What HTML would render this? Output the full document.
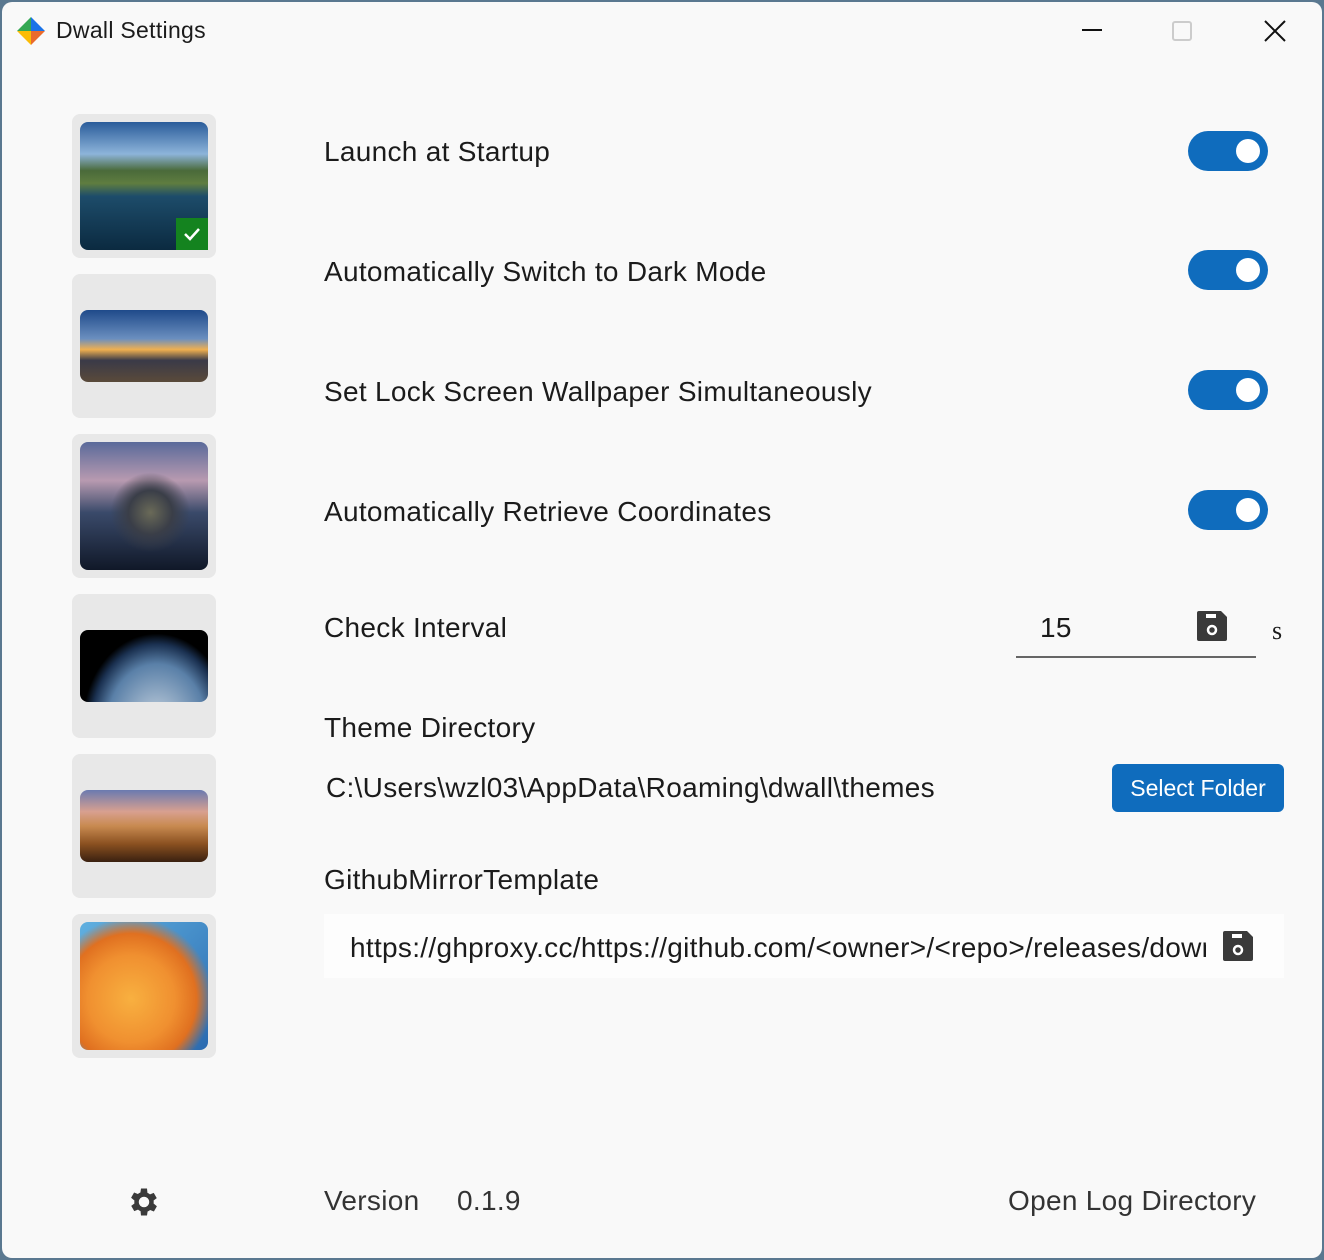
<!DOCTYPE html>
<html><head><meta charset="utf-8"><style>
*{margin:0;padding:0;box-sizing:border-box}
html,body{width:1324px;height:1260px;overflow:hidden;background:#5a7890}
#win{position:absolute;left:2px;top:2px;width:1320px;height:1256px;background:#f9f9f9;border-radius:10px;font-family:"Liberation Sans",sans-serif;color:#1b1b1b}
.a{position:absolute}
.t{font-size:28px;letter-spacing:0.3px;white-space:nowrap}
.card{position:absolute;left:70px;width:144px;height:144px;background:#e8e8e8;border-radius:8px}
.img{position:absolute;left:8px;width:128px;border-radius:8px;overflow:hidden}
.tg{position:absolute;left:1186px;width:80px;height:40px;border-radius:20px;background:#0f6cbd}
.tg::after{content:"";position:absolute;right:8px;top:8px;width:24px;height:24px;border-radius:50%;background:#fff}
</style></head><body><div id="win">
<svg class="a" style="left:14px;top:14px" width="30" height="30" viewBox="0 0 30 30"><polygon points="15,1 15,15 1,15" fill="#34a853"/><polygon points="15,1 29,15 15,15" fill="#1a73e8"/><polygon points="1,15 15,15 15,29" fill="#fbbc05"/><polygon points="15,15 29,15 15,29" fill="#ea6b2d"/></svg>
<div class="a" style="left:54px;top:15px;font-size:23px;letter-spacing:0.3px">Dwall Settings</div>
<div class="a" style="left:1080px;top:27px;width:20px;height:2px;background:#111"></div>
<div class="a" style="left:1170px;top:19px;width:20px;height:20px;border:2px solid #ccc;border-radius:3px"></div>
<svg class="a" style="left:1262px;top:18px" width="22" height="22"><path d="M1 1L21 21M21 1L1 21" stroke="#111" stroke-width="2"/></svg>

<div class="card" style="top:112px"><div class="img" style="top:8px;height:128px;background:linear-gradient(180deg,#2a5c9a 0%,#8db4da 25%,#4a6a3a 38%,#5f7d40 48%,#1d4c6a 58%,#0b2a40 100%)"></div><div class="a" style="left:104px;top:104px;width:32px;height:32px;background:#14831f"><svg width="32" height="32"><path d="M9 16l5 5 9-10" stroke="#fff" stroke-width="2.5" fill="none"/></svg></div></div>
<div class="card" style="top:272px"><div class="img" style="top:36px;height:72px;background:linear-gradient(180deg,#1f4a8a 0%,#6b8fbf 40%,#f0b050 55%,#3a3a48 70%,#5a4a3a 100%)"></div></div>
<div class="card" style="top:432px"><div class="img" style="top:8px;height:128px;background:radial-gradient(ellipse at 55% 55%,#6a6a58 0%,#3a3e48 22%,transparent 40%),linear-gradient(180deg,#5a6a9a 0%,#b89ab0 30%,#3a4a6a 55%,#101828 100%)"></div></div>
<div class="card" style="top:592px"><div class="img" style="top:36px;height:72px;background:radial-gradient(ellipse at 60% 130%,#c8d4e0 0%,#5a80a8 45%,#1a3050 60%,#000 68%)"></div></div>
<div class="card" style="top:752px"><div class="img" style="top:36px;height:72px;background:linear-gradient(180deg,#6a7ab0 0%,#d8a090 30%,#c88a50 50%,#8a5020 75%,#3a2010 100%)"></div></div>
<div class="card" style="top:912px"><div class="img" style="top:8px;height:128px;background:radial-gradient(ellipse at 40% 60%,#f8b040 0%,#f09030 40%,#e07020 60%,transparent 75%),linear-gradient(135deg,#60b0e0,#2a6ab0)"></div></div>

<div class="a t" style="left:322px;top:134px">Launch at Startup</div>
<div class="a t" style="left:322px;top:254px">Automatically Switch to Dark Mode</div>
<div class="a t" style="left:322px;top:374px">Set Lock Screen Wallpaper Simultaneously</div>
<div class="a t" style="left:322px;top:494px">Automatically Retrieve Coordinates</div>
<div class="tg" style="top:129px"></div>
<div class="tg" style="top:248px"></div>
<div class="tg" style="top:368px"></div>
<div class="tg" style="top:488px"></div>

<div class="a t" style="left:322px;top:610px">Check Interval</div>
<div class="a t" style="left:1038px;top:610px">15</div>
<svg class="a" style="left:1194px;top:608px" width="32" height="32" viewBox="0 0 32 32"><path d="M3 1h22l6 6v22a2 2 0 0 1-2 2H3a2 2 0 0 1-2-2V3a2 2 0 0 1 2-2z" fill="#3a3a3a"/><rect x="10" y="4" width="10" height="4" fill="#fff"/><circle cx="16" cy="20" r="4" fill="none" stroke="#fff" stroke-width="2.5"/></svg>
<div class="a" style="left:1014px;top:654px;width:240px;height:2px;background:#666"></div>
<div class="a" style="left:1270px;top:614px;font-family:'Liberation Serif',serif;font-size:26px">s</div>

<div class="a t" style="left:322px;top:710px">Theme Directory</div>
<div class="a t" style="left:324px;top:770px">C:\Users\wzl03\AppData\Roaming\dwall\themes</div>
<div class="a" style="left:1110px;top:762px;width:172px;height:48px;background:#0f6cbd;border-radius:6px;color:#fff;font-size:23px;text-align:center;line-height:48px">Select Folder</div>

<div class="a t" style="left:322px;top:862px">GithubMirrorTemplate</div>
<div class="a" style="left:322px;top:912px;width:960px;height:64px;background:#fdfdfd"></div>
<div class="a t" style="left:348px;top:930px;width:856px;overflow:hidden">https://ghproxy.cc/https://github.com/&lt;owner&gt;/&lt;repo&gt;/releases/download</div>
<svg class="a" style="left:1220px;top:928px" width="32" height="32" viewBox="0 0 32 32"><path d="M3 1h22l6 6v22a2 2 0 0 1-2 2H3a2 2 0 0 1-2-2V3a2 2 0 0 1 2-2z" fill="#3a3a3a"/><rect x="10" y="4" width="10" height="4" fill="#fff"/><circle cx="16" cy="20" r="4" fill="none" stroke="#fff" stroke-width="2.5"/></svg>

<svg class="a" style="left:124px;top:1182px" width="36" height="36" viewBox="0 0 24 24"><path fill="#3a3a3a" d="M19.4 13a7.5 7.5 0 0 0 0-2l2.1-1.6-2-3.5-2.5 1a7 7 0 0 0-1.7-1L15 3h-4l-.4 2.7a7 7 0 0 0-1.7 1l-2.5-1-2 3.5L6.6 11a7.5 7.5 0 0 0 0 2l-2.1 1.6 2 3.5 2.5-1a7 7 0 0 0 1.7 1L11 21h4l.4-2.7a7 7 0 0 0 1.7-1l2.5 1 2-3.5zM13 15.5a3.5 3.5 0 1 1 0-7 3.5 3.5 0 0 1 0 7z" transform="translate(-1 0)"/></svg>
<div class="a t" style="left:322px;top:1183px;color:#333">Version</div>
<div class="a t" style="left:455px;top:1183px;color:#333">0.1.9</div>
<div class="a t" style="left:1006px;top:1183px;color:#333">Open Log Directory</div>
</div></body></html>
